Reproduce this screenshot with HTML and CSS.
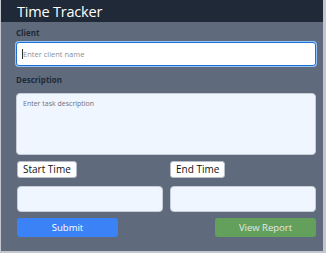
FILE: index.html
```html
<!DOCTYPE html>
<html>
<head>
<meta charset="utf-8">
<link rel="stylesheet" href="styles.css">
</head>
<body>
<div class="app">
  <header class="bar"><h1 class="title">Time Tracker</h1></header>
  <main class="form">
    <label class="lbl">Client</label>
    <div class="client"><span class="caret"></span><span class="ph">Enter client name</span></div>
    <label class="lbl desc-lbl">Description</label>
    <div class="area"><span class="ph">Enter task description</span></div>
    <div class="times">
      <div class="col"><span class="tbtn">Start Time</span><div class="tin"></div></div>
      <div class="col"><span class="tbtn">End Time</span><div class="tin"></div></div>
    </div>
    <div class="actions">
      <button class="btn submit">Submit</button>
      <button class="btn report">View Report</button>
    </div>
  </main>
</div>
</body>
</html>
```

FILE: styles.css
```css
html, body { margin: 0; padding: 0; }
body {
  width: 326px; height: 253px; overflow: hidden;
  background: #c3c7cd;
  font-family: "Open Sans", "Noto Sans", sans-serif;
}
.app {
  box-sizing: border-box;
  margin-left: 1px;
  width: 322px;
  height: 251px;
  background: #5f6b7c;
  display: flex; flex-direction: column;
}
.bar {
  height: 22px;
  background: #1f2937;
  display: flex; align-items: center;
  padding-left: 16px;
}
.title {
  margin: 0;
  color: #fff;
  font-weight: 400;
  font-size: 14.5px;
  letter-spacing: -0.2px;
  line-height: 1;
  padding-top: 2px;
}
.form {
  padding: 5px 7px 0 15px;
  display: flex; flex-direction: column;
}
.lbl {
  font-size: 8px; font-weight: 700; color: #1f2937;
  height: 12px; line-height: 12px;
  margin-bottom: 3px;
}
.client {
  height: 24px;
  box-sizing: border-box;
  background: #fff;
  border: 1.5px solid #1d6fd1;
  box-shadow: 0 0 0 1px #93c5fd;
  border-radius: 3px;
  display: flex; align-items: center;
  padding-left: 5px;
}
.caret { width: 1px; height: 10px; background: #333; }
.ph { font-size: 7.5px; color: #8a8f98; }
.desc-lbl { margin-top: 8px; margin-bottom: 7px; }
.area {
  height: 62px; box-sizing: border-box;
  background: #eff6ff;
  border: 1px solid #c9ced6;
  border-radius: 4px;
  padding: 1px 6px;
  line-height: 10px;
}
.area .ph { font-size: 7px; color: #6b7280; }
.times {
  margin-top: 6px;
  display: grid; grid-template-columns: 146px 146px; column-gap: 7px;
  padding-left: 1px;
}
.col { display: flex; flex-direction: column; align-items: flex-start; }
.tbtn {
  height: 17px; box-sizing: border-box;
  background: #fff; border: 1px solid #b8bec7; border-radius: 3px;
  font-size: 10px; color: #111; line-height: 15px;
  padding: 0 5px;
}
.tin {
  margin-top: 8px;
  align-self: stretch;
  height: 26px; box-sizing: border-box;
  background: #eff6ff; border: 1px solid #c9ced6; border-radius: 4px;
}
.actions {
  margin-top: 6px; padding-left: 1px;
  display: flex; justify-content: space-between; width: 299px;
}
.btn {
  width: 101px; height: 19px; border: 0; border-radius: 3px;
  font-family: inherit; font-size: 9.5px; padding: 0;
}
.submit { background: #3b82f6; color: #fff; }
.report { background: #62a05c; color: #e5e7eb; }
```
